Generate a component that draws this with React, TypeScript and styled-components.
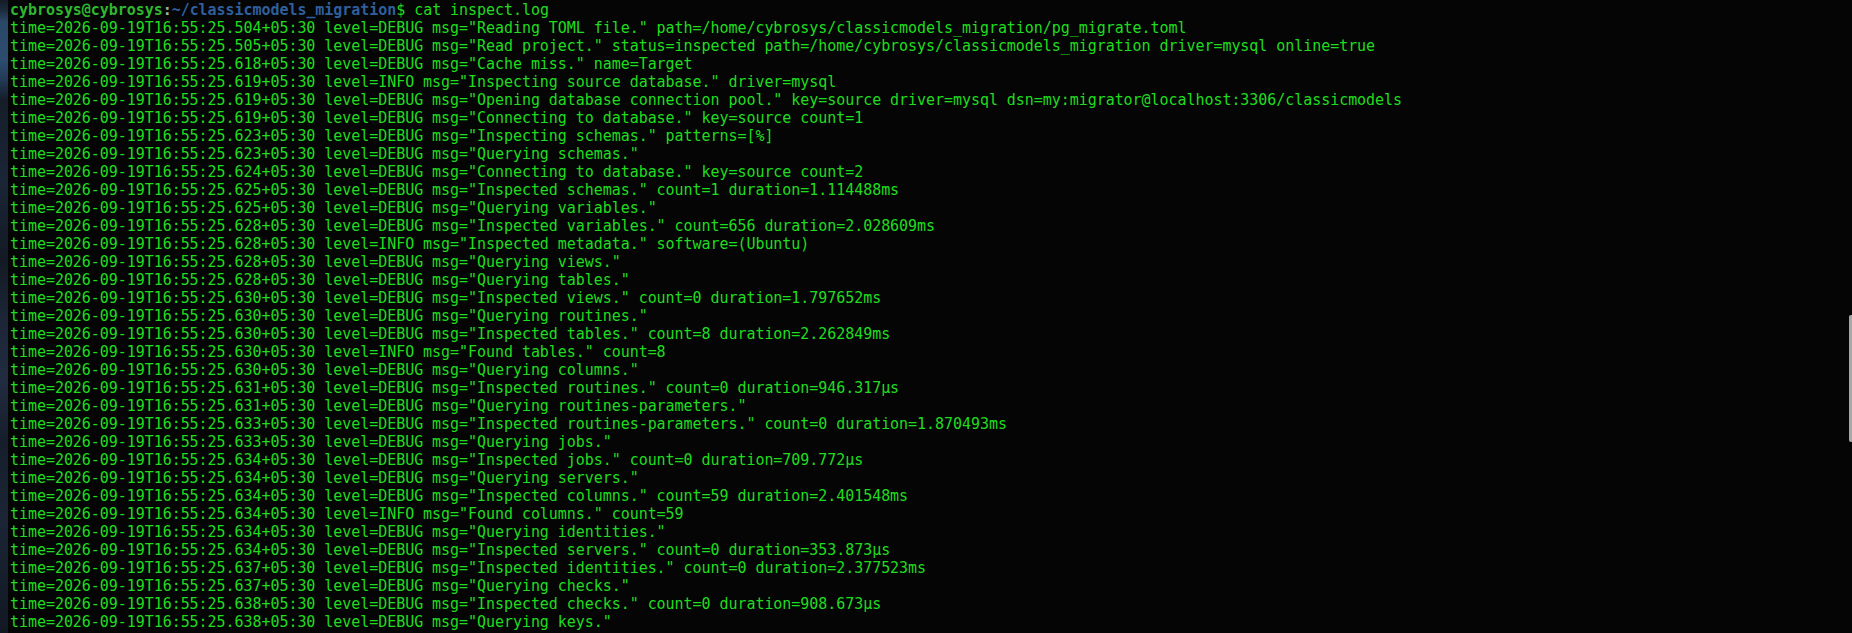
import React from "react";
import styled, { createGlobalStyle } from "styled-components";

const Global = createGlobalStyle`
  html, body { margin: 0; padding: 0; background: #050505; }
  #root { height: 633px; overflow: hidden; }
`;

const Screen = styled.div`
  position: relative;
  display: flex;
  width: 1852px;
  height: 633px;
  overflow: hidden;
  background: #050505;
`;

const Wallpaper = styled.div`
  flex: 0 0 8px;
  background: linear-gradient(
    180deg,
    #141c27 0px,
    #1c2a3c 10px,
    #2a4868 22px,
    #2d4d70 60px,
    #223a56 80px,
    #151d28 100px,
    #1a2536 180px,
    #131a24 260px,
    #1c2637 320px,
    #222c40 380px,
    #161e2b 440px,
    #1b2535 520px,
    #121823 633px
  );
`;

const Terminal = styled.div`
  flex: 1;
  display: flex;
  flex-direction: column;
  padding: 1px 0 0 2px;
  font-family: "DejaVu Sans Mono", "Liberation Mono", monospace;
  font-size: 15px;
  line-height: 18px;
  letter-spacing: -0.05px;
  color: #1fdc1f;
`;

const Line = styled.div`
  white-space: pre;
  flex: 0 0 18px;
`;

const User = styled.span`
  color: #2fb82f;
  font-weight: bold;
`;

const Colon = styled.span`
  color: #9ab89a;
  font-weight: bold;
`;

const Path = styled.span`
  color: #2f5f9c;
  font-weight: bold;
`;

const Cmd = styled.span`
  color: #1fdc1f;
`;

const Scrollbar = styled.div`
  position: absolute;
  right: 0;
  top: 315px;
  width: 3px;
  height: 127px;
  background: #a8a8a8;
  border-top-left-radius: 2px;
  border-bottom-left-radius: 2px;
`;

const T = (ms: string) => `time=2026-09-19T16:55:25.${ms}+05:30 `;

const lines: string[] = [
  T("504") + 'level=DEBUG msg="Reading TOML file." path=/home/cybrosys/classicmodels_migration/pg_migrate.toml',
  T("505") + 'level=DEBUG msg="Read project." status=inspected path=/home/cybrosys/classicmodels_migration driver=mysql online=true',
  T("618") + 'level=DEBUG msg="Cache miss." name=Target',
  T("619") + 'level=INFO msg="Inspecting source database." driver=mysql',
  T("619") + 'level=DEBUG msg="Opening database connection pool." key=source driver=mysql dsn=my:migrator@localhost:3306/classicmodels',
  T("619") + 'level=DEBUG msg="Connecting to database." key=source count=1',
  T("623") + 'level=DEBUG msg="Inspecting schemas." patterns=[%]',
  T("623") + 'level=DEBUG msg="Querying schemas."',
  T("624") + 'level=DEBUG msg="Connecting to database." key=source count=2',
  T("625") + 'level=DEBUG msg="Inspected schemas." count=1 duration=1.114488ms',
  T("625") + 'level=DEBUG msg="Querying variables."',
  T("628") + 'level=DEBUG msg="Inspected variables." count=656 duration=2.028609ms',
  T("628") + 'level=INFO msg="Inspected metadata." software=(Ubuntu)',
  T("628") + 'level=DEBUG msg="Querying views."',
  T("628") + 'level=DEBUG msg="Querying tables."',
  T("630") + 'level=DEBUG msg="Inspected views." count=0 duration=1.797652ms',
  T("630") + 'level=DEBUG msg="Querying routines."',
  T("630") + 'level=DEBUG msg="Inspected tables." count=8 duration=2.262849ms',
  T("630") + 'level=INFO msg="Found tables." count=8',
  T("630") + 'level=DEBUG msg="Querying columns."',
  T("631") + 'level=DEBUG msg="Inspected routines." count=0 duration=946.317µs',
  T("631") + 'level=DEBUG msg="Querying routines-parameters."',
  T("633") + 'level=DEBUG msg="Inspected routines-parameters." count=0 duration=1.870493ms',
  T("633") + 'level=DEBUG msg="Querying jobs."',
  T("634") + 'level=DEBUG msg="Inspected jobs." count=0 duration=709.772µs',
  T("634") + 'level=DEBUG msg="Querying servers."',
  T("634") + 'level=DEBUG msg="Inspected columns." count=59 duration=2.401548ms',
  T("634") + 'level=INFO msg="Found columns." count=59',
  T("634") + 'level=DEBUG msg="Querying identities."',
  T("634") + 'level=DEBUG msg="Inspected servers." count=0 duration=353.873µs',
  T("637") + 'level=DEBUG msg="Inspected identities." count=0 duration=2.377523ms',
  T("637") + 'level=DEBUG msg="Querying checks."',
  T("638") + 'level=DEBUG msg="Inspected checks." count=0 duration=908.673µs',
  T("638") + 'level=DEBUG msg="Querying keys."',
];

export default function App() {
  return (
    <>
      <Global />
      <Screen>
        <Wallpaper />
        <Terminal>
          <Line>
            <User>cybrosys@cybrosys</User>
            <Colon>:</Colon>
            <Path>~/classicmodels_migration</Path>
            <Cmd>$ cat inspect.log</Cmd>
          </Line>
          {lines.map((l, i) => (
            <Line key={i}>{l}</Line>
          ))}
        </Terminal>
        <Scrollbar />
      </Screen>
    </>
  );
}
